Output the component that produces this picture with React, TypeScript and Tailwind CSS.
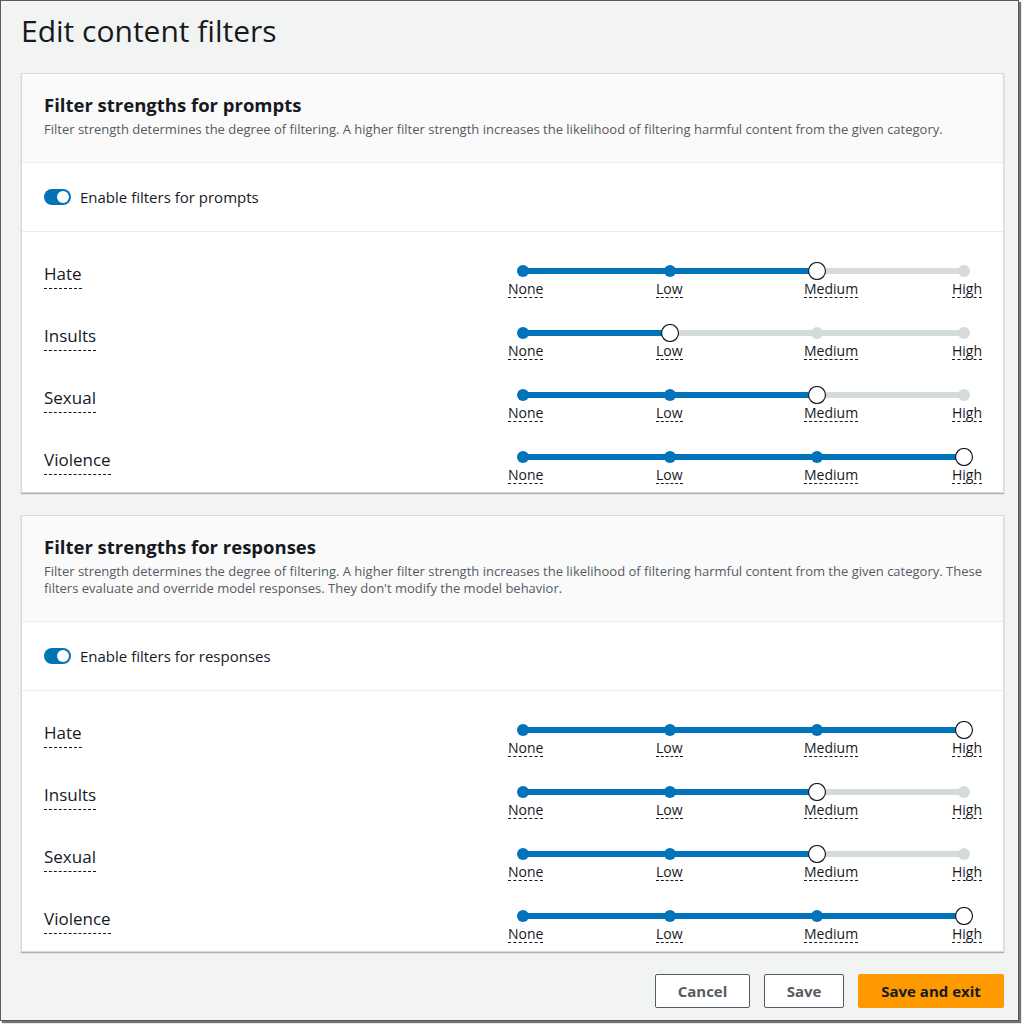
import React from "react";

type Level = 0 | 1 | 2 | 3;

interface FilterRow {
  name: string;
  value: Level;
}

const LEVELS = ["None", "Low", "Medium", "High"];
const TICKS = [15, 162, 309, 456];

const promptFilters: FilterRow[] = [
  { name: "Hate", value: 2 },
  { name: "Insults", value: 1 },
  { name: "Sexual", value: 2 },
  { name: "Violence", value: 3 },
];

const responseFilters: FilterRow[] = [
  { name: "Hate", value: 3 },
  { name: "Insults", value: 2 },
  { name: "Sexual", value: 2 },
  { name: "Violence", value: 3 },
];

const StrengthSlider = ({ value }: { value: Level }) => {
  const pos = TICKS[value];
  return (
    <div className="flex flex-col w-[472px] shrink-0">
      <svg className="block" width="472" height="18" viewBox="0 0 472 18">
        <line x1={15} y1={9} x2={456} y2={9} stroke="#d5dbdb" strokeWidth={6} strokeLinecap="round" />
        <line x1={15} y1={9} x2={pos} y2={9} stroke="#0073bb" strokeWidth={6} strokeLinecap="round" />
        {TICKS.map((x, i) =>
          i === value ? null : (
            <circle key={x} cx={x} cy={9} r={6} fill={i < value ? "#0073bb" : "#d5dbdb"} />
          )
        )}
        <circle cx={pos} cy={9} r={8.5} fill="#ffffff" stroke="#16191f" strokeWidth={1.2} />
      </svg>
      <div className="mt-[1px] grid grid-cols-[148px_148px_148px_auto] leading-[17px]">
        {LEVELS.map((l) => (
          <span
            key={l}
            className="block w-fit text-[14px] leading-[16px] text-[#16191f] border-b border-dashed border-[#16191f]"
          >
            {l}
          </span>
        ))}
      </div>
    </div>
  );
};

const FilterCard = ({
  title,
  description,
  toggleLabel,
  rows,
}: {
  title: string;
  description: React.ReactNode;
  toggleLabel: string;
  rows: FilterRow[];
}) => (
  <div className="bg-white border border-[#d5dbdb] shadow-[0_1px_1px_rgba(0,28,36,0.3)]">
    <div className="bg-[#fafafa] border-b border-[#eaeded] px-[22px] pt-[20px] pb-[24px]">
      <h2 className="text-[18.5px] leading-[22px] font-bold text-[#16191f]">{title}</h2>
      <p className="mt-[5px] text-[13px] leading-[17px] text-[#545b64] whitespace-nowrap">{description}</p>
    </div>
    <div className="border-b border-[#eaeded] px-[22px] h-[69px] flex items-center gap-[9px]">
      <div className="w-[27px] h-[16px] rounded-full bg-[#0073bb] flex items-center justify-end pr-[2px]">
        <div className="w-[12px] h-[12px] rounded-full bg-white" />
      </div>
      <span className="text-[15px] text-[#16191f]">{toggleLabel}</span>
    </div>
    <div className="px-[22px] pt-[30px] flex flex-col gap-[18px]">
      {rows.map((r) => (
        <div key={r.name} className="h-[44px] flex">
          <div className="w-[464px] shrink-0 pt-[2px]">
            <span className="block w-fit text-[17px] leading-[20px] text-[#16191f] border-b border-dashed border-[#16191f] pb-[4px]">
              {r.name}
            </span>
          </div>
          <StrengthSlider value={r.value} />
        </div>
      ))}
    </div>
  </div>
);

export default function App() {
  return (
    <div className="w-[1022px] h-[1024px] bg-white" style={{ fontFamily: '"Open Sans", "Noto Sans", sans-serif' }}>
      <div className="w-[1019px] h-[1021px] bg-[#f2f3f3] border border-[#5a5a5a] shadow-[2px_2px_1px_rgba(0,0,0,0.55)] pl-[20px] pr-[14px] pt-[12px] flex flex-col">
        <h1 className="text-[30px] leading-[36px] text-[#16191f] font-normal">Edit content filters</h1>
        <div className="mt-[24px] flex flex-col gap-[22px]">
          <FilterCard
            title="Filter strengths for prompts"
            description="Filter strength determines the degree of filtering. A higher filter strength increases the likelihood of filtering harmful content from the given category."
            toggleLabel="Enable filters for prompts"
            rows={promptFilters}
          />
          <FilterCard
            title="Filter strengths for responses"
            description={
              <>
                Filter strength determines the degree of filtering. A higher filter strength increases the likelihood of filtering harmful content from the given category. These
                <br />
                filters evaluate and override model responses. They don't modify the model behavior.
              </>
            }
            toggleLabel="Enable filters for responses"
            rows={responseFilters}
          />
        </div>
        <div className="mt-[22px] flex justify-end gap-[14px]">
          <button className="w-[95px] h-[34px] border border-[#545b64] rounded-[2px] bg-white text-[15px] font-bold text-[#545b64]">
            Cancel
          </button>
          <button className="w-[80px] h-[34px] border border-[#545b64] rounded-[2px] bg-white text-[15px] font-bold text-[#545b64]">
            Save
          </button>
          <button className="w-[146px] h-[34px] rounded-[2px] bg-[#ff9900] text-[15px] font-bold text-[#16191f]">
            Save and exit
          </button>
        </div>
      </div>
    </div>
  );
}
